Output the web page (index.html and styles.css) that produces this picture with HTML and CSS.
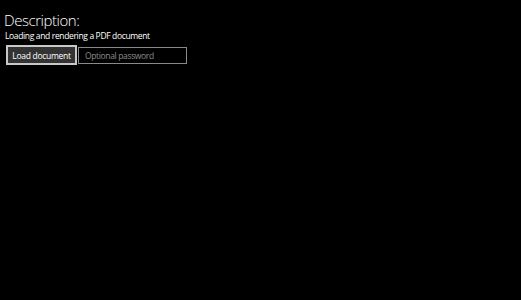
FILE: index.html
```html
<!DOCTYPE html>
<html>
<head>
<meta charset="utf-8">
<link rel="stylesheet" href="styles.css">
</head>
<body>
<div class="page">
  <h1 class="title">Description:</h1>
  <p class="desc">Loading and rendering a PDF document</p>
  <div class="controls">
    <button class="btn">Load document</button>
    <input class="pwd" type="password" placeholder="Optional password">
  </div>
</div>
</body>
</html>
```
FILE: styles.css
```css
html, body {
  margin: 0;
  padding: 0;
  background: #000;
  width: 521px;
  height: 300px;
  overflow: hidden;
}
.page {
  padding: 11px 0 0 4px;
  font-family: "Open Sans", "Noto Sans", sans-serif;
  color: #fff;
}
.title {
  margin: 0;
  font-size: 15px;
  font-weight: 300;
  line-height: 19px;
  letter-spacing: -0.45px;
}
.desc {
  margin: 0 0 0 1px;
  font-size: 8.5px;
  line-height: 12px;
  letter-spacing: -0.35px;
}
.controls {
  display: flex;
  align-items: center;
  gap: 1px;
  margin-top: 3px;
}
.btn {
  box-sizing: border-box;
  height: 20px;
  width: 71px;
  margin-left: 2px;
  background: #333;
  border: 2px solid #c8c8c8;
  color: #fff;
  font-family: inherit;
  font-size: 8.5px;
  letter-spacing: -0.3px;
  padding: 0;
}
.pwd {
  box-sizing: border-box;
  height: 17px;
  width: 109px;
  background: #000;
  border: 1.5px solid #8a8a8a;
  color: #fff;
  font-family: inherit;
  font-size: 8.5px;
  letter-spacing: -0.35px;
  padding: 0 0 0 6px;
  outline: none;
}
.pwd::placeholder {
  color: #8c8c8c;
}
```
